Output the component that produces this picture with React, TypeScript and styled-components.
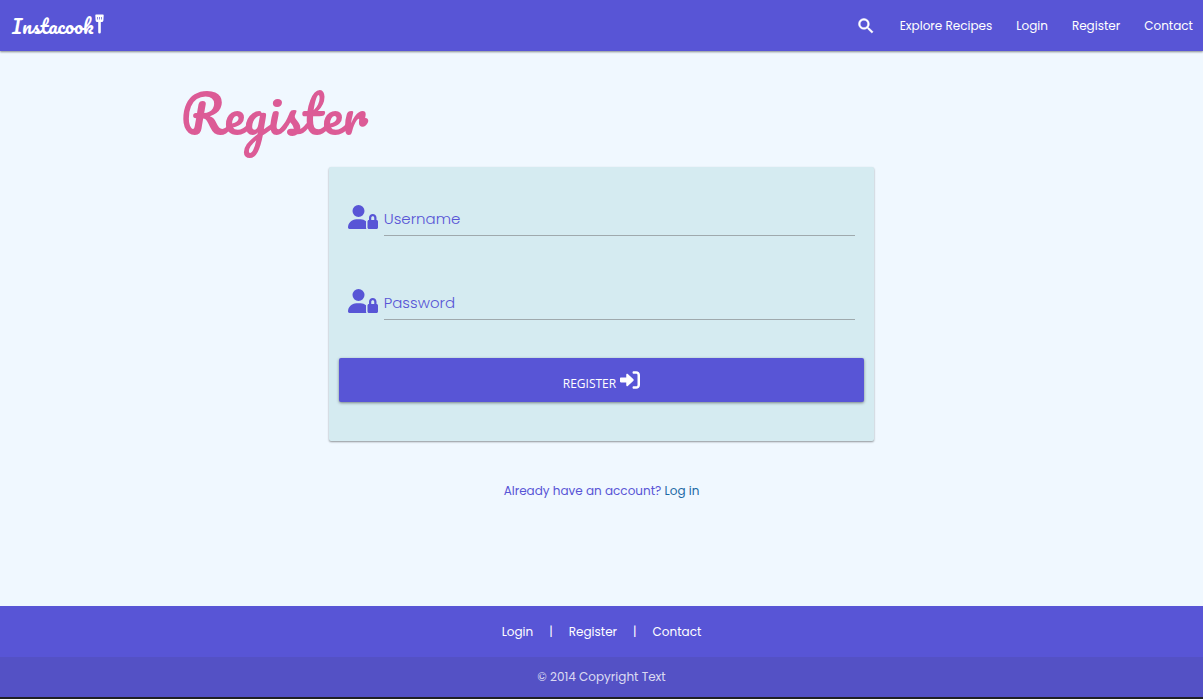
import React from "react";
import styled, { createGlobalStyle } from "styled-components";
import { MdSearch } from "react-icons/md";
import { FaUserLock } from "react-icons/fa6";

const purple = "#5855d6";
const script = `Pacifico, cursive`;

const GlobalStyle = createGlobalStyle`
  *, *::before, *::after { box-sizing: border-box; }
  body {
    margin: 0;
    background: #f0f8ff;
    font-family: Poppins, Inter, sans-serif;
    font-size: 12px;
    line-height: 20px;
  }
  a { text-decoration: none; }
`;

const Page = styled.div`
  display: flex;
  flex-direction: column;
  min-height: 100vh;
`;

const NavBar = styled.nav`
  display: flex;
  align-items: center;
  justify-content: space-between;
  height: 51px;
  padding: 0 10px 0 12px;
  background: ${purple};
  box-shadow: 0 1px 2px rgba(0, 0, 0, 0.45);
`;

const Brand = styled.a`
  display: flex;
  align-items: center;
  gap: 2px;
  color: #fff;
  font: 400 20px/32px ${script};

  & > svg {
    margin-bottom: 4px;
  }
`;

const NavList = styled.ul`
  display: flex;
  align-items: center;
  gap: 24px;
  margin: 0;
  padding: 0;
  list-style: none;
`;

const NavLink = styled.a`
  display: flex;
  color: #fff;
`;

const SearchIcon = styled(MdSearch)`
  width: 20px;
  height: 20px;

  & > path:last-child {
    stroke: currentColor;
    stroke-width: 0.6;
  }
`;

const Main = styled.main`
  flex: 1;
  width: 70%;
  margin: 0 auto;
`;

const Title = styled.h1`
  margin: 21px 0 11px;
  color: #dc5b96;
  font: 400 51px/84px ${script};
`;

const Card = styled.form`
  width: calc(66.67% - 16px);
  margin: 0 auto;
  padding: 27px 10px 39px;
  border-radius: 2px;
  background: #d5ebf1;
  box-shadow: 0 1px 2px rgba(0, 0, 0, 0.4);
`;

const Fields = styled.div`
  display: grid;
  gap: 42px;
  margin-bottom: 38px;
`;

const Field = styled.div`
  display: flex;
  gap: 6px;
  padding: 0 9px;
  color: ${purple};

  & > svg {
    width: 30px;
    height: 24px;
    margin-top: 11px;
  }
`;

const InputWrap = styled.div`
  position: relative;
  flex: 1;
`;

const Label = styled.label`
  position: absolute;
  left: 0;
  top: 15px;
  font-size: 15px;
  font-weight: 300;
  pointer-events: none;
`;

const Input = styled.input`
  display: block;
  width: 100%;
  height: 42px;
  padding: 10px 0 0;
  border: 0;
  border-bottom: 1px solid #9fa9ad;
  outline: 0;
  background: transparent;
  color: ${purple};
  font: inherit;
  font-size: 15px;

  &:focus + label,
  &:not(:placeholder-shown) + label {
    top: 0;
    font-size: 12px;
  }
`;

const SubmitButton = styled.button`
  display: flex;
  align-items: center;
  justify-content: center;
  gap: 4px;
  width: 100%;
  height: 44px;
  border: 0;
  border-radius: 2px;
  background: ${purple};
  box-shadow: 0 1px 3px rgba(0, 0, 0, 0.45);
  color: #fff;
  font: 12px/20px "Open Sans", "Noto Sans", sans-serif;
  text-transform: uppercase;
  cursor: pointer;

  & > span {
    padding-top: 7px;
  }
`;

const Prompt = styled.p`
  margin: 40px 0;
  color: ${purple};
  text-align: center;

  & > a {
    color: #1d69a5;
  }
`;

const Footer = styled.footer`
  border-bottom: 2px solid #202024;
  background: ${purple};
  color: #fff;
`;

const FooterLinks = styled.div`
  display: flex;
  align-items: center;
  justify-content: center;
  gap: 16px;
  height: 51px;
`;

const Copyright = styled.div`
  height: 40px;
  background: rgba(51, 51, 51, 0.1);
  color: rgba(255, 255, 255, 0.8);
  line-height: 40px;
  text-align: center;
`;

const Spatula = () => (
  <svg width="9" height="20" viewBox="0 0 9 20" fill="currentColor" aria-hidden="true">
    <path
      fillRule="evenodd"
      d="M1 .5H8Q8.7 .5 8.7 1.3L8.4 6.5Q8.2 7.8 7.2 7.9L5.8 8V18.2Q5.8 19.5 4.5 19.5T3.2 18.2V8L1.8 7.9Q.8 7.8 .6 6.5L.3 1.3Q.3 .5 1 .5ZM2 3V5.6H2.7V3ZM4.15 3V5.6H4.85V3ZM6.3 3V5.6H7V3Z"
    />
  </svg>
);

const EnterArrow = () => (
  <svg width="20" height="20" viewBox="0 0 512 512" fill="currentColor" aria-hidden="true">
    <path d="M345 238 200 102c-6-6-16-8-25-4s-15 12-15 22v72H24c-13 0-24 11-24 24v80c0 13 11 24 24 24h136v72c0 10 6 18 15 22s19 2 25-4l145-136c9-10 9-26 0-36Z" />
    <path d="M416 32h-64c-18 0-32 14-32 32s14 32 32 32h64c18 0 32 14 32 32v256c0 18-14 32-32 32h-64c-18 0-32 14-32 32s14 32 32 32h64c53 0 96-43 96-96V128c0-53-43-96-96-96Z" />
  </svg>
);

const links = ["Login", "Register", "Contact"];

export default function App() {
  return (
    <Page>
      <GlobalStyle />
      <NavBar>
        <Brand href="#home">
          Instacook
          <Spatula />
        </Brand>
        <NavList>
          <li>
            <NavLink href="#search" aria-label="Search">
              <SearchIcon />
            </NavLink>
          </li>
          {["Explore Recipes", ...links].map((text) => (
            <li key={text}>
              <NavLink href="#">{text}</NavLink>
            </li>
          ))}
        </NavList>
      </NavBar>
      <Main>
        <Title>Register</Title>
        <Card onSubmit={(e) => e.preventDefault()}>
          <Fields>
            <Field>
              <FaUserLock aria-hidden="true" />
              <InputWrap>
                <Input id="username" type="text" placeholder=" " />
                <Label htmlFor="username">Username</Label>
              </InputWrap>
            </Field>
            <Field>
              <FaUserLock aria-hidden="true" />
              <InputWrap>
                <Input id="password" type="password" placeholder=" " />
                <Label htmlFor="password">Password</Label>
              </InputWrap>
            </Field>
          </Fields>
          <SubmitButton type="submit">
            <span>Register</span>
            <EnterArrow />
          </SubmitButton>
        </Card>
        <Prompt>
          Already have an account? <a href="#login">Log in</a>
        </Prompt>
      </Main>
      <Footer>
        <FooterLinks>
          {links.map((text, i) => (
            <React.Fragment key={text}>
              {i > 0 && <span>|</span>}
              <NavLink href="#">{text}</NavLink>
            </React.Fragment>
          ))}
        </FooterLinks>
        <Copyright>© 2014 Copyright Text</Copyright>
      </Footer>
    </Page>
  );
}
